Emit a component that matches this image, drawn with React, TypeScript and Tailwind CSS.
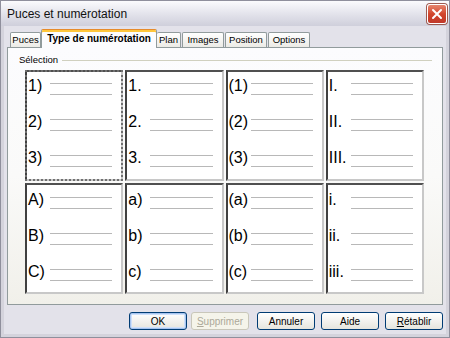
import React from "react";

const cells: string[][] = [
  ["1)", "2)", "3)"],
  ["1.", "2.", "3."],
  ["(1)", "(2)", "(3)"],
  ["I.", "II.", "III."],
  ["A)", "B)", "C)"],
  ["a)", "b)", "c)"],
  ["(a)", "(b)", "(c)"],
  ["i.", "ii.", "iii."],
];

function Cell({ labels, selected, top }: { labels: string[]; selected?: boolean; top: number }) {
  return (
    <div
      className={
        "relative h-[111px] bg-white border-t-2 border-l-2 border-r-2 border-b-2 border-t-[#505050] border-l-[#404040] border-r-[#c8c8c8] border-b-[#c8c8c8] overflow-hidden " +
        (selected ? "outline-2 outline-dotted outline-[#707070] -outline-offset-2" : "")
      }
      style={{ paddingTop: top }}
    >
      {labels.map((l) => (
        <div key={l} className="h-[36px]">
          <div className="flex h-[20px] items-center">
            <span className="min-w-[21px] pl-[1px] text-[16px] leading-[20px] text-black">{l}</span>
            <div className="ml-[2px] mr-[9px] mb-[6px] h-px flex-1 bg-[#b8b8b8]" />
          </div>
          <div className="ml-[23px] mr-[9px] -mt-[2px] h-px bg-[#b8b8b8]" />
        </div>
      ))}
    </div>
  );
}

function Btn({ children, def, disabled }: { children: React.ReactNode; def?: boolean; disabled?: boolean }) {
  return (
    <div
      className={
        "flex h-[18px] w-[58px] items-center justify-center rounded-[3px] border text-[10px] " +
        (disabled
          ? "border-[#c9c7ba] bg-[#f5f4ea] text-[#aca899]"
          : "border-[#003c74] bg-gradient-to-b from-white to-[#e6e5de] text-black") +
        (def ? " shadow-[inset_0_0_0_1px_#a6c4ef,inset_0_0_0_2px_#cfe0fa]" : "")
      }
    >
      {children}
    </div>
  );
}

export default function App() {
  return (
    <div
      className="flex h-[338px] w-[450px] flex-col overflow-hidden border border-[#8f8f9c] bg-[#e3e2ea]"
      style={{ fontFamily: '"Liberation Sans", Arial, sans-serif' }}
    >
      {/* Title bar */}
      <div className="flex h-[25px] shrink-0 items-center justify-between bg-gradient-to-b from-[#fbfbfd] via-[#e4e4ec] to-[#cfcfdb] pl-[6px] pr-[2px]">
        <span className="text-[12px] text-[#111]">Puces et numérotation</span>
        <div className="flex h-[20px] w-[20px] items-center justify-center rounded-[3px] border border-white bg-gradient-to-b from-[#e5846d] via-[#d2452c] to-[#c0392b] shadow-[0_0_0_1px_#9c5a50]">
          <svg width="12" height="12" viewBox="0 0 12 12">
            <path d="M2 2 L10 10 M10 2 L2 10" stroke="white" strokeWidth="2" strokeLinecap="round" />
          </svg>
        </div>
      </div>

      {/* Body */}
      <div className="flex flex-1 flex-col border-x-[3px] border-b-[3px] border-[#d4d3dc] px-[3px]">
        {/* Tabs */}
        <div className="mt-[2px] flex h-[19px] items-end pl-[3px] text-[10px]">
          <div className="flex h-[15px] w-[31px] items-center justify-center rounded-t-[2px] border border-b-0 border-[#919b9c] bg-gradient-to-b from-white to-[#ecebe6] text-[9.5px]">Puces</div>
          <div className="relative -mb-px flex h-[19px] w-[116px] items-center justify-center rounded-t-[2px] border border-b-0 border-[#919b9c] border-t-[#e68b2c] bg-[#fcfcfe] pb-[1px] font-bold shadow-[inset_0_2px_0_#ffc73c]">Type de numérotation</div>
          <div className="flex h-[15px] w-[24px] items-center justify-center rounded-t-[2px] border border-b-0 border-l-0 border-[#919b9c] bg-gradient-to-b from-white to-[#ecebe6] text-[9.5px]">Plan</div>
          <div className="ml-[1px] flex h-[15px] w-[42px] items-center justify-center rounded-t-[2px] border border-b-0 border-[#919b9c] bg-gradient-to-b from-white to-[#ecebe6] text-[9.5px]">Images</div>
          <div className="ml-[1px] flex h-[15px] w-[42px] items-center justify-center rounded-t-[2px] border border-b-0 border-[#919b9c] bg-gradient-to-b from-white to-[#ecebe6] text-[9.5px]">Position</div>
          <div className="ml-[1px] flex h-[15px] w-[42px] items-center justify-center rounded-t-[2px] border border-b-0 border-[#919b9c] bg-gradient-to-b from-white to-[#ecebe6] text-[9.5px]">Options</div>
        </div>

        {/* Panel */}
        <div className="flex h-[258px] flex-col border border-[#919b9c] bg-gradient-to-b from-[#fcfcfe] via-[#fafaf9] to-[#f1f0ea] pl-[11px] pr-[10px] pt-[5px]">
          <div className="flex h-[14px] items-center gap-[4px]">
            <span className="text-[9.5px] text-black">Sélection</span>
            <div className="h-px flex-1 bg-[#d0d0bf]" />
          </div>
          <div className="ml-[6px] mt-[3px] grid w-[399px] grid-cols-4 gap-x-[2px] gap-y-[2px]">
            {cells.map((c, i) => (
              <Cell key={i} labels={c} selected={i === 0} top={i < 4 ? 4 : 5} />
            ))}
          </div>
        </div>

        {/* Buttons */}
        <div className="mt-[7px] flex items-center pl-[122px]">
          <Btn def>OK</Btn>
          <div className="ml-[4px]">
            <Btn disabled>
              <span className="underline">S</span>upprimer
            </Btn>
          </div>
          <div className="ml-[8px]">
            <Btn>Annuler</Btn>
          </div>
          <div className="ml-[6px]">
            <Btn>Aide</Btn>
          </div>
          <div className="ml-[6px]">
            <Btn>
              <span className="underline">R</span>établir
            </Btn>
          </div>
        </div>
      </div>
    </div>
  );
}
